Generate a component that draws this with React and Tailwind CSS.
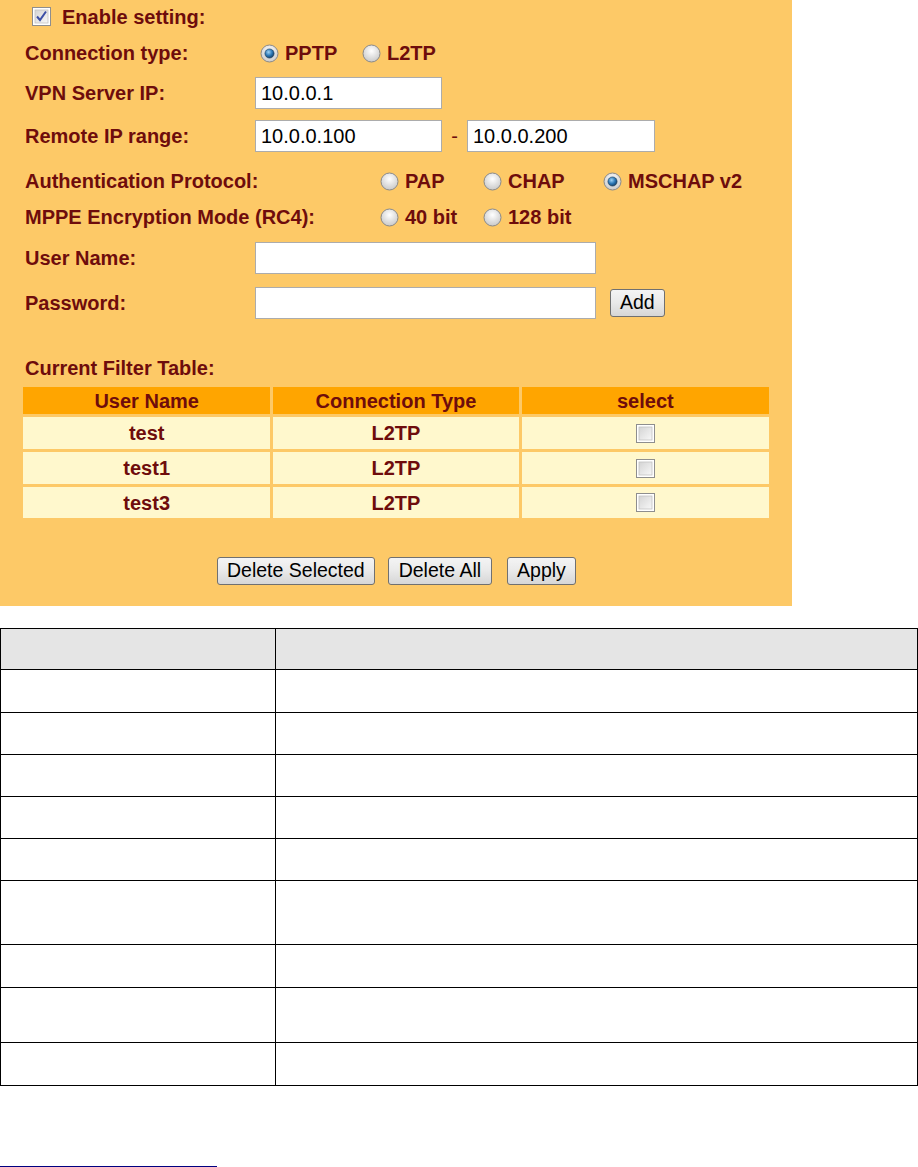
import React from 'react';

const label = 'font-bold text-[#6e0c0c] text-[20px] leading-none';

function Radio({ checked }) {
  return (
    <svg width="19" height="19" viewBox="0 0 19 19" className="shrink-0">
      <defs>
        <radialGradient id="rbg" cx="50%" cy="35%" r="65%">
          <stop offset="0%" stopColor="#ffffff" />
          <stop offset="100%" stopColor="#c9c9c9" />
        </radialGradient>
        <radialGradient id="rdot" cx="40%" cy="35%" r="70%">
          <stop offset="0%" stopColor="#9fd3f5" />
          <stop offset="55%" stopColor="#2b77b5" />
          <stop offset="100%" stopColor="#133a5c" />
        </radialGradient>
      </defs>
      <circle cx="9.5" cy="9.5" r="8.5" fill="url(#rbg)" stroke="#8a8a8a" strokeWidth="1" />
      {checked && <circle cx="9.5" cy="9.5" r="4.6" fill="url(#rdot)" stroke="#1d3d5a" strokeWidth="0.6" />}
    </svg>
  );
}

function Check({ checked }) {
  return (
    <svg width="19" height="19" viewBox="0 0 19 19" className="shrink-0">
      <defs>
        <linearGradient id="cbg" x1="0" y1="0" x2="1" y2="1">
          <stop offset="0%" stopColor="#d4d4d4" />
          <stop offset="100%" stopColor="#f8f8f8" />
        </linearGradient>
      </defs>
      <rect x="0.5" y="0.5" width="18" height="18" fill="#ffffff" stroke="#8e8e8e" />
      <rect x="3" y="3" width="13" height="13" fill="url(#cbg)" stroke="#c2c2c2" strokeWidth="0.8" />
      {checked && <path d="M5 9.5 L8 13 L14 4.5" fill="none" stroke="#3c4fa6" strokeWidth="2" />}
    </svg>
  );
}

function Opt({ checked, text, w }) {
  return (
    <div className={`flex items-center gap-[6px] ${w}`}>
      <Radio checked={checked} />
      <span className={label}>{text}</span>
    </div>
  );
}

function Field({ value, w }) {
  return (
    <div className={`h-[32px] ${w} bg-white border border-[#acacac] flex items-center pl-[5px] text-[20px] text-black font-['Liberation_Sans',Arial,sans-serif]`}>
      {value}
    </div>
  );
}

function Btn({ children, px = 'px-[9px]' }) {
  return (
    <button className={`h-[28px] ${px} rounded-[3px] border border-[#707070] bg-gradient-to-b from-[#f4f4f4] via-[#e9e9e9] to-[#d6d6d6] text-[19.5px] leading-none text-black font-['Liberation_Sans',Arial,sans-serif]`}>
      {children}
    </button>
  );
}

const users = [
  { name: 'test', type: 'L2TP' },
  { name: 'test1', type: 'L2TP' },
  { name: 'test3', type: 'L2TP' },
];

const docRows = [43, 42, 42, 42, 42, 64, 43, 55, 43];

export default function App() {
  return (
    <div className="w-[918px] h-[1167px] bg-white overflow-hidden font-['Liberation_Sans',Arial,sans-serif]">
      <div className="w-[792px] h-[606px] bg-[#fdc967] pl-[25px]">
        <div className="h-[33px] flex items-center gap-[11px] pl-[7px]">
          <Check checked />
          <span className={label}>Enable setting:</span>
        </div>
        <div className="h-[40px] flex items-center">
          <span className={`${label} w-[235px]`}>Connection type:</span>
          <Opt checked text="PPTP" w="w-[102px]" />
          <Opt text="L2TP" />
        </div>
        <div className="h-[40px] flex items-center">
          <span className={`${label} w-[230px]`}>VPN Server IP:</span>
          <Field value="10.0.0.1" w="w-[187px]" />
        </div>
        <div className="h-[45px] flex items-center">
          <span className={`${label} w-[230px]`}>Remote IP range:</span>
          <Field value="10.0.0.100" w="w-[187px]" />
          <span className="w-[25px] text-center text-[20px] text-[#6e0c0c]">-</span>
          <Field value="10.0.0.200" w="w-[188px]" />
        </div>
        <div className="h-[46px] flex items-center">
          <span className={`${label} w-[355px]`}>Authentication Protocol:</span>
          <Opt text="PAP" w="w-[103px]" />
          <Opt text="CHAP" w="w-[120px]" />
          <Opt checked text="MSCHAP v2" />
        </div>
        <div className="h-[26px] flex items-center">
          <span className={`${label} w-[355px]`}>MPPE Encryption Mode (RC4):</span>
          <Opt text="40 bit" w="w-[103px]" />
          <Opt text="128 bit" />
        </div>
        <div className="h-[56px] flex items-center">
          <span className={`${label} w-[230px]`}>User Name:</span>
          <Field value="" w="w-[341px]" />
        </div>
        <div className="h-[34px] flex items-center">
          <span className={`${label} w-[230px]`}>Password:</span>
          <Field value="" w="w-[341px]" />
          <div className="ml-[14px]">
            <Btn>Add</Btn>
          </div>
        </div>
        <div className="h-[35px]" />
        <div className="h-[26px] flex items-center">
          <span className={label}>Current Filter Table:</span>
        </div>
        <table className="ml-[-5px] mt-[3px] w-[752px] border-separate border-spacing-[3px] table-fixed">
          <thead>
            <tr className="h-[27px] bg-[#ffa500]">
              <th className={`${label} w-[247px]`}>User Name</th>
              <th className={`${label} w-[245px]`}>Connection Type</th>
              <th className={`${label} w-[247px]`}>select</th>
            </tr>
          </thead>
          <tbody>
            {users.map((u, i) => (
              <tr key={u.name} className={`${i === 2 ? 'h-[31px]' : 'h-[32px]'} bg-[#fff8cd]`}>
                <td className={`${label} text-center`}>{u.name}</td>
                <td className={`${label} text-center`}>{u.type}</td>
                <td>
                  <div className="flex justify-center">
                    <Check />
                  </div>
                </td>
              </tr>
            ))}
          </tbody>
        </table>
        <div className="mt-[36px] flex items-center pl-[192px]">
          <Btn>Delete Selected</Btn>
          <div className="ml-[13px]">
            <Btn px="px-[10px]">Delete All</Btn>
          </div>
          <div className="ml-[15px]">
            <Btn>Apply</Btn>
          </div>
        </div>
      </div>

      <table className="mt-[22px] w-[918px] border-collapse table-fixed">
        <tbody>
          <tr className="h-[41px] bg-[#e5e5e5]">
            <td className="w-[275px] border border-black" />
            <td className="border border-black" />
          </tr>
          {docRows.map((h, i) => (
            <tr key={i} style={{ height: h }}>
              <td className="border border-black" />
              <td className="border border-black" />
            </tr>
          ))}
        </tbody>
      </table>

      <div className="mt-[80px] w-[217px] h-px bg-[#000080]" />
    </div>
  );
}
